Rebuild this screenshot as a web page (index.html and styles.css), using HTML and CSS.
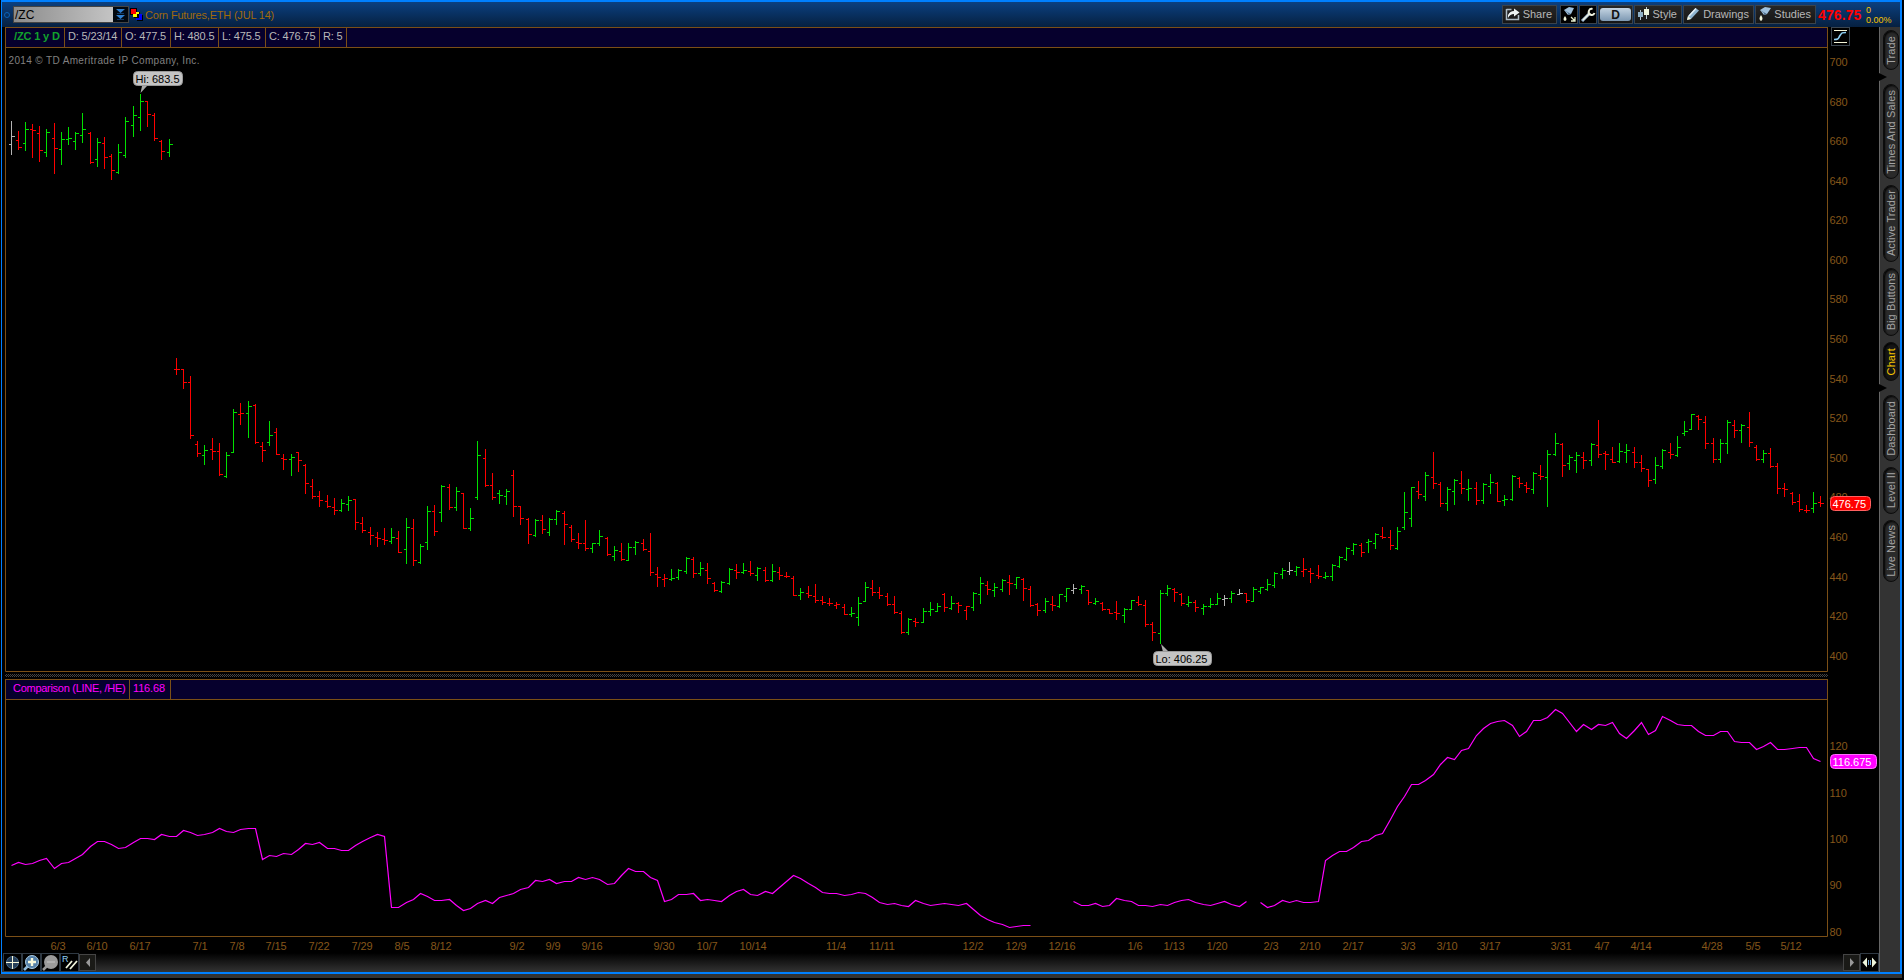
FILE: index.html
```html
<!DOCTYPE html>
<html lang="en">
<head>
    <meta charset="UTF-8">
    <title>/ZC Chart</title>
    <link rel="stylesheet" href="styles.css">
</head>
<body>
    <div class="window">
        <div class="titlebar">
            <span class="link-dot"></span>
            <div class="symbol">
                <span class="symbol-text">/ZC</span>
                <svg class="symbol-arrow" width="15" height="15" viewBox="0 0 15 15">
                    <path d="M3 2h9l-4.5 4zM3 8h9l-4.500 4z" fill="#2f7fd0"/>
                    <path d="M4 6.500h7M4 12.500h7" stroke="#123a66"/>
                </svg>
            </div>
            <svg class="flag" width="14" height="14" viewBox="0 0 14 14" shape-rendering="crispEdges">
                <path d="M0 0h7v7H0zM4 4h6v6H4zM7 7h6v6H7z" fill="#000"/>
                <path d="M6 6h6v6H6z" fill="#00f"/>
                <path d="M3 4h6v5H3z" fill="#ff0"/>
                <path d="M7 6v3H4v1h5V6z" fill="#000"/>
                <path d="M1 1h5v5H1z" fill="#f00"/>
            </svg>
            <span class="symbol-name">Corn Futures,ETH (JUL 14)</span>

            <div class="tools">
                <div class="btn share">
                    <svg width="16" height="14" viewBox="0 0 16 14">
                        <path d="M1.500 2.500h5M1.500 2v10.500h12V8" fill="none" stroke="#aebcc6" stroke-width="1.500"/>
                        <path d="M3 11V8q2-4 6-4V1.500L14.500 5.500 9 9.500V7Q5 7 3 11z" fill="#eef3f3"/>
                    </svg>
                    <span>Share</span>
                </div>
                <div class="btn small gap">
                    <svg width="16" height="16" viewBox="0 0 16 16">
                        <path d="M3 3 8 0l5 1-3 6-3 1z" fill="#9fc0dc"/>
                        <path d="M3 3l4 3 0 2 3-1" fill="#53718e"/>
                        <path d="M4 9q3 4 0 5-3-1 0-5z" fill="#f0f4dc"/>
                        <path d="M10 10l4 4M14 10v4h-4" stroke="#e8f0d0" stroke-width="1.300" fill="none"/>
                    </svg>
                </div>
                <div class="btn small">
                    <svg width="16" height="16" viewBox="0 0 16 16">
                        <path d="M2 14 9 7" stroke="#9fb9d0" stroke-width="3"/>
                        <path d="M3 13 9 7" stroke="#eef2e0" stroke-width="1.500"/>
                        <path d="M12.500 2a3 3 0 1 0 2 4" fill="none" stroke="#eef2e0" stroke-width="2"/>
                    </svg>
                </div>
                <div class="btn period"><span>D</span></div>
                <div class="btn style">
                    <svg width="14" height="14" viewBox="0 0 14 14" shape-rendering="crispEdges">
                        <path d="M3 3h1v10H3zM9 0h1v12H9z" fill="#b9cad6"/>
                        <path d="M1 5h5v5H1z" fill="#8fb0c6"/>
                        <path d="M7 2h5v6H7z" fill="#eef5dc"/>
                    </svg>
                    <span>Style</span>
                </div>
                <div class="btn drawings">
                    <svg width="14" height="14" viewBox="0 0 14 14">
                        <path d="M2 9 9.500 1l3.500 2.500L5 12l-4 1z" fill="#8fb4d0"/>
                        <path d="M3 9 10 1.500" stroke="#e6eff5" stroke-width="1.500"/>
                        <path d="M1 13l1-4 3 3z" fill="#f4f4dc"/>
                    </svg>
                    <span>Drawings</span>
                </div>
                <div class="btn studies">
                    <svg width="14" height="15" viewBox="0 0 14 15">
                        <path d="M2 3 7 0l6 1-4 6-3 1z" fill="#9fc0dc"/>
                        <path d="M2 3l4 3 0 2 3-1" fill="#53718e"/>
                        <path d="M3 8q3 4 0 6-3-2 0-6z" fill="#f0f4dc"/>
                    </svg>
                    <span>Studies</span>
                </div>
            </div>
            <span class="last">476.75</span>
            <div class="change"><span>0</span><span>0.00%</span></div>
        </div>

        <div class="workspace">
            <div class="charts">
                <div class="bar-row">
                    <div class="study-bar">
                        <span class="cell sym">/ZC 1 y D</span>
                        <span class="cell w57">D: 5/23/14</span>
                        <span class="cell w49">O: 477.5</span>
                        <span class="cell w48">H: 480.5</span>
                        <span class="cell w47">L: 475.5</span>
                        <span class="cell w54">C: 476.75</span>
                        <span class="cell w27">R: 5</span>
                    </div>
                    <svg class="curve-btn" width="19" height="19" viewBox="0 0 19 19">
                        <rect x=".5" y=".5" width="18" height="18" fill="#000" stroke="#3c4650"/>
                        <path d="M3 3.500h13M3 15.500h13" stroke="#f5f5d8"/>
                        <path d="M3 12.500c5 0 4-1 6-4s2-3 6-3" fill="none" stroke="#8ed0f5" stroke-width="1.600"/>
                    </svg>
                </div>
                <svg class="plot" id="price" width="1874" height="624" viewBox="5 48 1874 624">
                    <path class="frame" d="M5.500 48V671.500H1827.500V48"/>
                    <text class="copy" x="8.500" y="64">2014 © TD Ameritrade IP Company, Inc.</text>
                </svg>
                <div class="splitter"></div>
                <div class="study-bar magenta">
                    <span class="cell cmp">Comparison (LINE, /HE)</span>
                    <span class="cell w41">116.68</span>
                </div>
                <svg class="plot" id="compare" width="1874" height="253" viewBox="5 700 1874 253">
                    <path class="frame" d="M5.500 700V936.500H1827.500V700"/>
                </svg>
                <div class="bottombar">
                    <svg width="19" height="19" viewBox="0 0 19 19">
                        <rect class="ib" x=".5" y=".5" width="18" height="18"/>
                        <circle cx="9.500" cy="9.500" r="6" fill="#27405a" stroke="#4a6a88"/>
                        <path d="M9.500 3v13M3 9.500h13" stroke="#f5f5d8"/>
                    </svg>
                    <svg width="19" height="19" viewBox="0 0 19 19">
                        <rect class="ib" x=".5" y=".5" width="18" height="18"/>
                        <path d="M2 17l4-4" stroke="#8fb8d8" stroke-width="2.500"/>
                        <circle cx="10" cy="9" r="6.500" fill="#5580a8" stroke="#a9cbe4"/>
                        <path d="M10 5v8M6 9h8" stroke="#f8f8dc" stroke-width="2.400"/>
                    </svg>
                    <svg width="19" height="19" viewBox="0 0 19 19">
                        <rect class="ib" x=".5" y=".5" width="18" height="18"/>
                        <path d="M2 17l4-4" stroke="#999" stroke-width="2.500"/>
                        <circle cx="10" cy="9" r="7" fill="#9b9b9b"/>
                        <path d="M6 9h8" stroke="#b0b0b0" stroke-width="2"/>
                    </svg>
                    <svg width="19" height="19" viewBox="0 0 19 19">
                        <rect class="ib" x=".5" y=".5" width="18" height="18"/>
                        <text x="2" y="9" font-size="9" fill="#8ed0f5">R</text>
                        <path d="M6 15l6-7M10 16l7-8" stroke="#f0f4dc" stroke-width="1.800"/>
                    </svg>
                    <svg width="17" height="17" viewBox="0 0 17 17">
                        <rect class="sb" x=".5" y=".5" width="16" height="16"/>
                        <path d="M11 4v9L7 8.500z" fill="#999"/>
                    </svg>
                    <svg class="right" width="17" height="17" viewBox="0 0 17 17">
                        <rect class="sb" x=".5" y=".5" width="16" height="16"/>
                        <path d="M7 4v9l4-4.500z" fill="#999"/>
                    </svg>
                    <svg width="19" height="19" viewBox="0 0 19 19">
                        <rect class="ib" x=".5" y=".5" width="18" height="18"/>
                        <path d="M7 4.500v10L2.500 9.500zM12 4.500v10l4.500-5z" fill="#eef5dc"/>
                        <path d="M8.500 7v5M10.500 7v5" stroke="#6fa8dc"/>
                    </svg>
                </div>
            </div>

            <div class="sidebar">
                <div class="tab trade"><span>Trade</span></div>
                <i class="notch"></i>
                <div class="tab times"><span>Times And Sales</span></div>
                <div class="tab active-trader"><span>Active Trader</span></div>
                <div class="tab big"><span>Big Buttons</span></div>
                <div class="tab chart on"><span>Chart</span></div>
                <i class="notch"></i>
                <div class="tab dash"><span>Dashboard</span></div>
                <div class="tab level"><span>Level II</span></div>
                <div class="tab news"><span>Live News</span></div>
            </div>
        </div>
    </div>
    <div class="shadow"></div>
    <script src="chart.js"></script>
</body>
</html>
```
FILE: styles.css
```css
body {
    margin: 0;
    background: #000;
    overflow: hidden;
    font-family: "Liberation Sans", Arial, sans-serif;
    font-size: 11px;
    color: #b8b8b8;
}

.window {
    box-sizing: border-box;
    width: 1901px;
    height: 974px;
    margin-left: 1px;
    border: 2px solid #0080ff;
    border-left-width: 1px;
    background: #000;
}

.shadow {
    width: 1902px;
    height: 4px;
    background: #333;
}

/* title bar */
.titlebar {
    display: flex;
    align-items: center;
    height: 25px;
    padding-left: 2px;
    background: linear-gradient(#0b4080, #062040);
    white-space: nowrap;
}

.link-dot {
    width: 4px;
    height: 4px;
    border: 1px solid #0a62b8;
    border-radius: 50%;
}

.symbol {
    box-sizing: border-box;
    display: flex;
    width: 116px;
    height: 17px;
    margin-left: 3px;
    border: 1px solid #444;
    background: #000;
}

.symbol-text {
    flex: 1;
    padding-left: 1px;
    font-size: 12px;
    line-height: 16px;
    color: #000;
    background: linear-gradient(90deg, #8c8c8c, #c4c4c4);
}

.symbol-arrow {
    background: #02080f;
}

.flag {
    margin-left: 1px;
}

.symbol-name {
    margin-left: 1px;
    letter-spacing: -0.2px;
    color: #a06a0c;
}

.tools {
    display: flex;
    gap: 1px;
    margin-left: auto;
}

.btn {
    box-sizing: border-box;
    display: flex;
    align-items: center;
    justify-content: space-between;
    height: 19px;
    padding: 0 4px 1px 2px;
    border: 1px solid #39434d;
    background: linear-gradient(#262626, #161616);
}

.share { width: 55px; }
.small { width: 18px; padding: 0; background: #000; }
.gap { margin-left: 2px; }
.period { width: 35px; padding: 1px; }
.style { width: 48px; }
.drawings { width: 71px; }
.studies { width: 61px; }

.period span {
    flex: 1;
    height: 13px;
    border-radius: 3px;
    background: linear-gradient(#c4d4e2, #7d98b2);
    color: #111;
    font-weight: bold;
    font-size: 12px;
    line-height: 14px;
    text-align: center;
}

.last {
    width: 47px;
    padding-left: 2px;
    font-size: 14px;
    font-weight: bold;
    letter-spacing: 0.1px;
    color: #f00;
}

.change {
    display: flex;
    flex-direction: column;
    width: 34px;
    padding-left: 1px;
    font-size: 9px;
    line-height: 10px;
    color: #f5c400;
}

/* layout */
.workspace {
    display: flex;
    height: 945px;
}

.charts {
    width: 1877px;
}

.bar-row {
    display: flex;
}

.study-bar {
    box-sizing: border-box;
    display: flex;
    width: 1823px;
    height: 21px;
    margin-left: 3px;
    border: 1px solid #7b4f16;
    background: #06002d;
    line-height: 17px;
    letter-spacing: -0.15px;
    white-space: nowrap;
}

.cell {
    box-sizing: border-box;
    padding-left: 3px;
    border-right: 1px solid #7b4f16;
}

.sym {
    width: 59px;
    padding-left: 8px;
    color: #12a22c;
    font-weight: bold;
}

.w57 { width: 57px; }
.w49 { width: 49px; }
.w48 { width: 48px; }
.w47 { width: 47px; }
.w54 { width: 54px; }
.w27 { width: 27px; }
.w41 { width: 41px; }
.cmp { width: 124px; padding-left: 7px; letter-spacing: -0.28px; }

.magenta {
    color: #f0f;
}

.curve-btn {
    margin-left: 3px;
    margin-bottom: -1px;
}

.plot {
    display: block;
    margin-left: 3px;
}

.frame {
    fill: none;
    stroke: #7b4f16;
}

.copy {
    font-size: 10px;
    letter-spacing: 0.36px;
    fill: #808080;
}

.axis {
    fill: #85561a;
    letter-spacing: -0.1px;
}

.mid {
    text-anchor: middle;
}

.bars {
    fill: none;
    shape-rendering: crispEdges;
}

.line {
    fill: none;
    stroke: #f0f;
    stroke-width: 1.2;
}

.splitter {
    width: 1823px;
    height: 3px;
    margin: 2px 0 2px 3px;
    background: conic-gradient(#444 25%, #000 0 50%, #444 0 75%, #000 0) 0 0 / 2px 2px;
}

.bottombar {
    display: flex;
    align-items: center;
    height: 19px;
    padding-left: 1px;
    background: linear-gradient(#000, #333);
}

.ib {
    fill: #000;
    stroke: #2f3943;
}

.sb {
    fill: #1a1a17;
    stroke: #444;
}

.right {
    margin-left: auto;
}

/* vertical tabs */
.sidebar {
    box-sizing: border-box;
    display: flex;
    flex-direction: column;
    width: 21px;
    padding: 3px 0 0 3px;
    border-left: 1px solid #666;
    background: #333;
}

.tab {
    box-sizing: border-box;
    display: flex;
    align-items: center;
    justify-content: center;
    width: 16px;
    margin-bottom: 6px;
    border: 1px solid #0c0c0c;
    border-radius: 8px;
    background: #2a2a2a;
    box-shadow: inset 1px 1px 2px #000;
    color: #a4a4a4;
    font-size: 11px;
}

.tab span {
    writing-mode: vertical-rl;
    transform: rotate(180deg);
    white-space: nowrap;
    letter-spacing: 0.1px;
}

.trade { height: 40px; margin-bottom: 3px; }
.times { height: 95px; }
.active-trader { height: 77px; }
.big { height: 68px; }
.chart { height: 39px; margin-bottom: 3px; }
.dash { height: 66px; }
.level { height: 47px; }
.news { height: 62px; }

.on {
    color: #f5c400;
    background: #161616;
}

.notch {
    height: 8px;
    width: 8px;
    margin: 0 0 3px -4px;
    background: #000;
    clip-path: polygon(0 0, 100% 50%, 0 100%);
}
```
FILE: chart.js
```js
// each bar: colour, high, low, open, close (chart y coordinates)
const bars = `
w 121 155 144 136,r 131 150 140 147,g 122 151 143 129,r 124 158 129 130,r 126 162 133 150,g 129 157 152 132,
r 123 174 138 148,g 132 165 149 139,g 127 145 139 138,g 132 150 141 133,g 113 143 135 129,r 132 164 133 162,
g 138 167 159 142,r 137 169 143 157,r 154 180 156 170,g 144 174 172 152,g 117 158 155 121,g 106 137 125 115,
g 94 131 117 101,r 101 127 101 114,r 113 141 115 138,r 140 160 141 151,g 139 157 152 144,r 358 375 369 369,
r 369 389 369 382,r 376 439 382 435,r 441 457 444 453,g 445 465 455 450,r 438 460 449 451,r 443 476 451 474,
g 452 478 476 455,g 409 453 452 412,r 403 425 414 413,g 401 438 413 406,r 404 444 405 442,r 442 462 446 450,
g 421 446 442 435,r 428 455 432 454,r 454 470 458 459,g 454 476 459 457,r 452 472 452 460,r 464 494 465 483,
r 479 499 486 496,r 491 507 496 500,r 495 508 501 506,r 498 515 507 510,g 499 512 510 503,g 496 511 504 500,
r 499 530 499 522,r 517 533 523 530,r 527 545 532 535,r 532 547 537 538,r 528 545 539 540,g 528 544 541 537,
r 531 553 538 552,g 518 564 549 527,r 519 566 528 560,g 544 564 562 546,g 506 550 542 511,r 505 536 511 531,
g 485 522 512 486,r 484 510 487 507,g 487 511 507 491,r 493 529 493 528,g 508 531 528 518,g 441 500 497 455,
r 449 487 458 485,r 473 500 485 497,g 490 504 493 495,g 489 505 496 491,r 470 517 475 506,r 506 525 506 518,
r 518 544 519 534,g 519 537 535 520,r 515 534 520 529,g 518 536 532 519,g 510 525 519 511,r 511 545 513 524,
r 525 542 527 539,r 533 549 542 543,r 520 551 543 548,g 543 553 548 543,g 530 546 543 536,r 537 556 538 554,
g 546 561 556 550,r 543 561 551 559,g 543 561 560 547,g 541 555 547 542,r 539 551 543 549,r 533 576 551 572,
r 567 587 574 577,r 574 587 579 578,g 569 581 579 578,g 569 580 577 570,g 557 574 571 558,r 557 578 559 573,
g 562 576 573 568,r 563 584 570 578,r 582 592 583 590,g 581 593 591 582,g 568 585 583 569,r 564 579 570 572,
g 563 574 572 570,r 561 576 571 573,g 567 581 575 568,r 567 582 570 580,g 564 582 580 571,r 567 580 572 575,
r 572 578 576 576,r 576 596 578 595,g 588 600 595 592,r 586 598 593 595,r 584 603 596 600,r 596 605 600 602,
r 598 606 603 603,r 602 609 605 604,r 604 615 607 614,g 607 617 614 613,g 597 626 617 603,g 582 602 601 587,
r 580 596 588 592,r 587 599 592 595,r 593 606 596 604,r 596 614 604 612,r 611 634 613 632,g 618 635 632 619,
r 618 627 621 622,g 608 623 622 611,g 602 616 611 609,g 603 612 611 606,r 593 612 594 607,g 596 610 608 603,
r 602 613 603 605,r 606 620 610 606,g 592 611 607 593,g 577 604 594 583,r 581 595 585 589,g 583 597 590 587,
g 579 592 589 580,r 575 595 582 583,g 577 589 584 577,r 578 601 579 588,r 586 607 589 605,r 603 616 604 610,
g 598 613 610 601,r 596 611 604 605,g 594 608 606 594,g 588 602 596 588,w 584 594 590 588,g 585 594 589 586,
r 590 605 590 602,g 598 605 603 601,r 602 611 603 609,r 609 614 609 613,r 601 620 612 613,g 608 623 615 609,
g 600 610 609 600,r 596 606 602 604,r 600 627 605 624,r 622 641 624 632,g 590 644 633 593,g 585 596 593 588,
r 588 602 589 592,r 593 606 594 603,g 596 607 604 602,r 600 612 602 607,g 604 615 608 606,g 598 608 606 604,
g 593 605 604 598,w 595 606 599 598,g 591 603 598 593,w 589 595 594 593,r 593 603 593 600,g 587 602 601 589,
g 587 594 591 587,g 579 591 589 584,g 572 588 585 573,g 568 579 574 570,w 562 575 571 570,g 566 576 571 567,
r 558 577 571 569,r 568 583 571 573,r 565 579 575 576,g 572 579 577 576,g 564 581 576 565,g 556 568 566 557,
g 547 561 559 548,g 543 555 550 544,r 543 557 545 552,g 539 553 542 541,g 533 549 543 534,r 527 539 536 537,
r 530 550 537 545,g 527 550 548 531,g 492 530 527 512,g 487 527 518 487,r 481 499 491 494,g 472 501 496 475,
r 452 489 477 483,r 482 507 484 503,g 487 511 503 489,g 479 505 491 480,r 471 494 483 488,g 479 501 489 488,
r 482 505 488 500,g 483 504 500 484,g 474 494 486 482,r 482 502 483 501,g 495 506 500 499,g 475 501 499 476,
r 477 488 478 483,r 482 493 485 488,g 472 494 489 473,r 465 480 475 476,g 450 507 477 454,g 433 456 454 443,
r 443 477 444 465,g 455 470 463 457,g 452 473 460 455,r 452 469 457 460,g 443 466 460 444,r 420 458 445 454,
r 451 470 453 454,r 447 463 459 462,g 443 463 461 451,g 444 463 452 450,r 447 468 452 462,r 455 472 462 468,
r 469 487 469 480,g 457 484 479 465,g 449 469 466 450,r 443 459 452 454,g 436 457 455 447,g 421 436 433 431,
g 414 430 429 414,r 415 430 416 419,r 416 449 422 443,r 438 463 443 459,g 439 463 459 443,g 420 454 443 422,
r 420 438 425 430,g 424 443 430 425,r 412 447 427 442,r 445 461 447 459,g 450 463 459 453,r 448 468 453 466,
r 463 494 466 488,r 483 497 488 489,r 492 505 493 502,r 494 512 501 509,r 505 513 510 510,g 492 513 508 503,
r 496 507 502 503`.trim().split(',').map(b => b.trim().split(' '));

// comparison line, first bar index of each run and its y values
const runs = [
    [0, [865, 862, 864, 863, 860, 858, 868, 863, 862, 858, 854, 846, 841, 841, 844, 848, 847, 842, 838, 838, 839, 834, 836, 836,
        830, 832, 835, 834, 832, 828, 831, 832, 829, 828, 828, 859, 855, 856, 853, 854, 849, 843, 844, 842, 848, 848, 850, 850,
        845, 841, 837, 834, 836, 907, 907, 902, 899, 893, 896, 900, 900, 899, 905, 910, 908, 903, 900, 903, 897, 895, 893, 889,
        887, 880, 881, 879, 883, 881, 881, 877, 879, 877, 879, 884, 883, 875, 868, 871, 871, 877, 880, 901, 899, 894, 894, 893,
        900, 899, 900, 901, 895, 891, 889, 894, 895, 891, 893, 887, 881, 875, 878, 883, 887, 892, 893, 893, 895, 894, 892, 893,
        897, 902, 904, 903, 905, 906, 900, 903, 905, 904, 903, 904, 905, 903, 909, 915, 919, 922, 924, 927, 926, 925, 925]],
    [148, [901, 905, 905, 903, 906, 905, 898, 900, 901, 905, 905, 906, 904, 905, 902, 900, 899, 902, 904, 905, 903, 901, 904,
        906, 901]],
    [174, [902, 907, 905, 900, 902, 900, 902, 902, 901, 860, 855, 851, 851, 847, 841, 840, 835, 833, 819, 806, 796, 784, 784,
        780, 774, 764, 757, 759, 750, 748, 735, 728, 723, 721, 720, 725, 736, 731, 720, 720, 717, 709, 713, 722, 731, 724, 729,
        724, 725, 722, 733, 738, 730, 722, 734, 730, 716, 720, 724, 725, 725, 731, 735, 735, 731, 731, 741, 742, 742, 749, 746,
        742, 749, 749, 748, 747, 747, 758, 761]]
];

const dates = [['6/3', 58], ['6/10', 97], ['6/17', 140], ['7/1', 200], ['7/8', 237], ['7/15', 276], ['7/22', 319],
    ['7/29', 362], ['8/5', 402], ['8/12', 441], ['9/2', 517], ['9/9', 553], ['9/16', 592], ['9/30', 664], ['10/7', 707],
    ['10/14', 753], ['11/4', 836], ['11/11', 882], ['12/2', 973], ['12/9', 1016], ['12/16', 1062], ['1/6', 1135],
    ['1/13', 1174], ['1/20', 1217], ['2/3', 1271], ['2/10', 1310], ['2/17', 1353], ['3/3', 1408], ['3/10', 1447],
    ['3/17', 1490], ['3/31', 1561], ['4/7', 1602], ['4/14', 1641], ['4/28', 1712], ['5/5', 1753], ['5/12', 1791]];

const colors = { r: '#f00', g: '#00e000', w: '#b4b4b4' };
const barX = i => Math.floor((i < 190 ? 11.08 : 11.25) + i * 7.181);
const price = document.getElementById('price');
const compare = document.getElementById('compare');

function tag(x, y, w, text, fill, stroke, color) {
    return `<rect x="${x + 0.5}" y="${y + 0.5}" width="${w - 1}" height="14" rx="4" fill="${fill}" stroke="${stroke}"/>
        <text x="${x + 2.5}" y="${y + 11.5}" fill="${color}">${text}</text>`;
}

// price bars, one path per colour
const paths = { r: '', g: '', w: '' };
bars.forEach(([c, h, l, o, cl], i) => {
    const x = barX(i);
    paths[c] += `M${x + 0.5} ${h}V${l}M${x - 2} ${+o + 0.5}h2M${x + 1} ${+cl + 0.5}h3`;
});
let out = '';
for (const c in paths) {
    out += `<path class="bars" stroke="${colors[c]}" d="${paths[c]}"/>`;
}
for (let p = 700; p >= 400; p -= 20) {
    out += `<text class="axis" x="1829.5" y="${Math.round(66 + (700 - p) * 1.979)}">${p}</text>`;
}
out += '<path d="M140.500 93l1.500-7h5z" fill="#aaa"/>' + tag(133, 71, 50, 'Hi: 683.5', '#c4c4c4', '#999', '#000');
out += '<path d="M1161 644l2 8h6z" fill="#aaa"/>' + tag(1153, 651, 59, 'Lo: 406.25', '#c4c4c4', '#999', '#000');
out += tag(1830, 496, 41, '476.75', '#f00', '#ff6060', '#fff');
price.insertAdjacentHTML('beforeend', out);

// comparison study
out = '';
runs.forEach(([start, ys]) => {
    const pts = ys.map((y, i) => `${barX(start + i) + 0.5},${y + 0.5}`).join(' ');
    out += `<polyline class="line" points="${pts}"/>`;
});
[[120, 750], [110, 797], [100, 843], [90, 889], [80, 936]].forEach(([v, y]) => {
    out += `<text class="axis" x="1829.5" y="${y}">${v}</text>`;
});
dates.forEach(([d, x]) => {
    out += `<text class="axis mid" x="${x}" y="950">${d}</text>`;
});
out += tag(1830, 754, 47, '116.675', '#f0f', '#ff70ff', '#fff');
compare.insertAdjacentHTML('beforeend', out);
```
